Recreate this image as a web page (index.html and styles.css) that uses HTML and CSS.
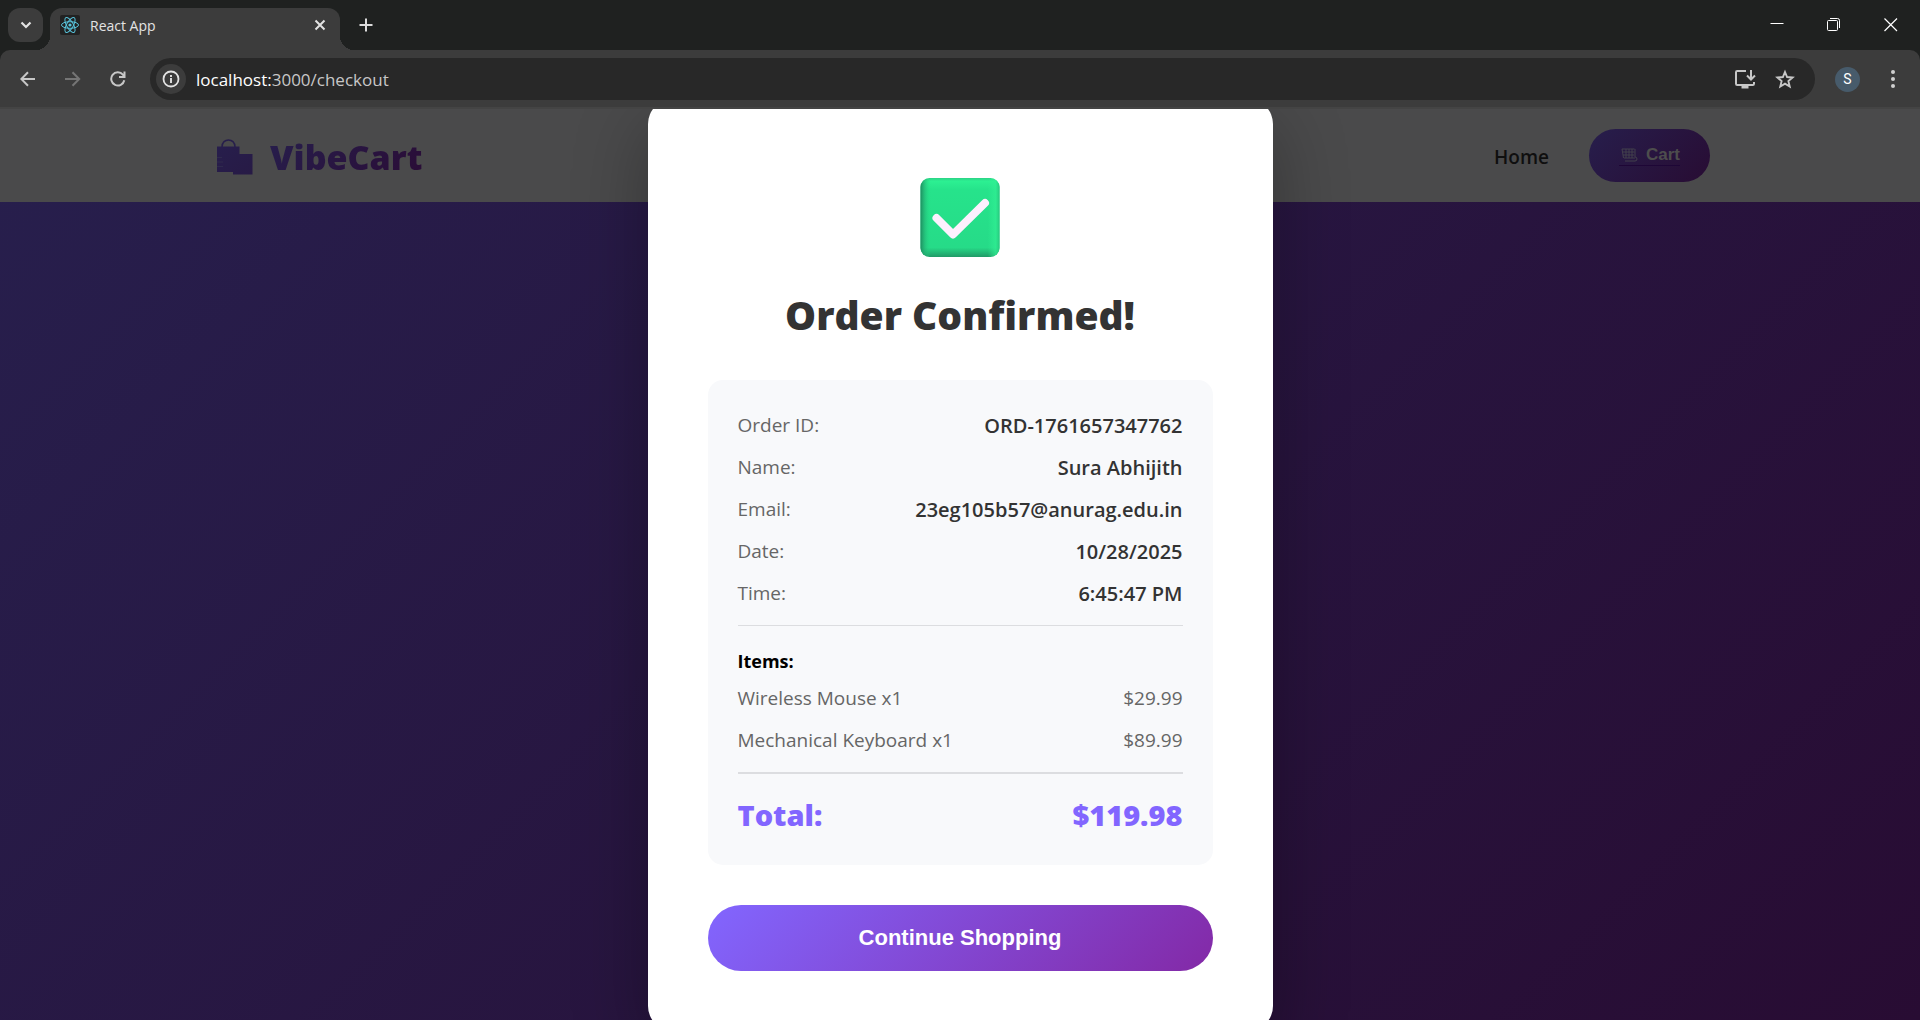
FILE: index.html
```html
<!DOCTYPE html>
<html lang="en">
<head>
<meta charset="utf-8">
<title>React App</title>
<link rel="stylesheet" href="styles.css">
</head>
<body>
<div class="tabstrip">
  <button class="tab-search" aria-label="Search tabs"><svg width="12" height="12" viewBox="0 0 12 12"><path d="M1.500 3.500 6 8l4.500-4.500" fill="none" stroke="#e3e3e3" stroke-width="2.200"/></svg></button>
  <div class="tab">
    <svg class="favicon" viewBox="0 0 20 20"><rect width="20" height="20" rx="2" fill="#222"/><g fill="none" stroke="#58c4dc" stroke-width="1"><ellipse cx="10" cy="10" rx="8.500" ry="3.300"/><ellipse cx="10" cy="10" rx="8.500" ry="3.300" transform="rotate(60 10 10)"/><ellipse cx="10" cy="10" rx="8.500" ry="3.300" transform="rotate(120 10 10)"/></g><circle cx="10" cy="10" r="1.600" fill="#58c4dc"/></svg>
    <span class="tab-title">React App</span>
    <button class="tab-close" aria-label="Close tab"><svg width="12" height="12" viewBox="0 0 12 12"><path d="M1.500 1.500l9 9m0-9l-9 9" stroke="#e3e3e3" stroke-width="2"/></svg></button>
  </div>
  <button class="new-tab" aria-label="New tab"><svg width="14" height="14" viewBox="0 0 14 14"><path d="M7 0.500v13M0.500 7h13" stroke="#dcdcdc" stroke-width="2"/></svg></button>
  <div class="window-controls">
    <button aria-label="Minimize"><svg width="14" height="14" viewBox="0 0 14 14"><path d="M0.500 5.500h13" stroke="#fff"/></svg></button>
    <button aria-label="Restore"><svg width="14" height="14" viewBox="0 0 14 14" fill="none" stroke="#fff"><rect x="0.500" y="2.500" width="10" height="10" rx="1"/><path d="M3 0.500h7.500q2 0 2 2V10"/></svg></button>
    <button aria-label="Close"><svg width="14" height="14" viewBox="0 0 14 14"><path d="M0.500 0.500l12.500 12.500m0-12.500l-12.500 12.500" stroke="#fff" stroke-width="1.200"/></svg></button>
  </div>
</div>
<div class="toolbar">
  <div class="nav-buttons">
    <button aria-label="Back"><svg width="16" height="16" viewBox="0 0 16 16"><path d="M15 8H1.500M8 1.200 1.300 8 8 14.800" fill="none" stroke="#c7c7c7" stroke-width="2"/></svg></button>
    <button aria-label="Forward"><svg width="16" height="16" viewBox="0 0 16 16"><path d="M0 8h14M7.500 1.200 14.200 8 7.500 14.800" fill="none" stroke="#757575" stroke-width="2"/></svg></button>
    <button aria-label="Reload"><svg width="16" height="16" viewBox="0 0 16 16"><path d="M14.300 9.300a6.600 6.600 0 1 1-1.400-5.600L14.300 5M14.500 0.500V6H9" fill="none" stroke="#c7c7c7" stroke-width="2"/></svg></button>
  </div>
  <div class="omnibox">
    <button class="site-info" aria-label="Site information"><svg width="18" height="18" viewBox="0 0 18 18"><circle cx="9" cy="9" r="7.500" fill="none" stroke="#e3e3e3" stroke-width="1.800"/><path d="M9 8v5M9 5v1.900" stroke="#e3e3e3" stroke-width="1.900"/></svg></button>
    <div class="address"><span class="host">localhost:</span>3000/checkout</div>
    <button class="install" aria-label="Install app"><svg width="22" height="20" viewBox="0 0 22 20"><path d="M12 2H3.200Q2 2 2 3.200v11.600Q2 16 3.200 16h15.600q1.200 0 1.200-1.200V13M17 1v9M13 6.500l4 4 4-4" fill="none" stroke="#c7c7c7" stroke-width="2"/><path d="M7.500 16h7v3.500h-7z" fill="#c7c7c7"/></svg></button>
    <button class="star" aria-label="Bookmark"><svg width="20" height="20" viewBox="0 0 20 20"><path d="M10 3l2.100 5 5.500.500-4.200 3.600 1.300 5.400-4.700-2.800-4.700 2.800 1.300-5.400-4.200-3.600 5.500-.500z" fill="none" stroke="#c7c7c7" stroke-width="1.900"/></svg></button>
  </div>
  <button class="profile" aria-label="Profile">S</button>
  <button class="menu" aria-label="Menu"><svg width="6" height="20" viewBox="0 0 6 20" fill="#d0d0d0"><circle cx="3" cy="3" r="2"/><circle cx="3" cy="10" r="2"/><circle cx="3" cy="17" r="2"/></svg></button>
</div>
<div class="page">
  <header class="site-header">
    <div class="container">
      <a class="logo" href="#">
        <svg width="36" height="37" viewBox="0 0 36 37"><defs><linearGradient id="bag" x1="0" y1="0" x2="1" y2="1"><stop offset="0" stop-color="#271e4c"/><stop offset="1" stop-color="#271a45"/></linearGradient></defs><path d="M5 8C5-1.500 18-1.500 18 8" fill="none" stroke="#271e4c" stroke-width="1.500"/><path d="M0 7.500h22.500v7.500H35.500v20.500h-19.500v-2.500H0z" fill="url(#bag)"/><path d="M0 18.500h5M0 23h6M0 27.500h6" stroke="#33304f" stroke-width=".7"/></svg>
        <span class="logo-text">VibeCart</span>
      </a>
      <nav>
        <a class="home" href="#">Home</a>
        <a class="cart-link" href="#"><span class="cart-label"><svg width="17" height="14" viewBox="0 0 17 14" fill="none" stroke="#43404d"><path d="M1 1h12.500M1.500 4h12M2 7h11M3 10h11M1 1l1.500 9M5 1v9M8 1v9M11 1v9M14 1v8q2 0 2 2t-2 2H4"/></svg>Cart</span></a>
      </nav>
    </div>
  </header>
  <div class="overlay">
    <main class="modal" role="dialog" aria-labelledby="title">
      <svg class="check" viewBox="0 0 80 80"><defs>
        <linearGradient id="face" x1="0" y1="0" x2="0" y2="1"><stop offset="0" stop-color="#2cd286"/><stop offset=".04" stop-color="#2cf092"/><stop offset=".15" stop-color="#26e38b"/><stop offset=".88" stop-color="#26db88"/><stop offset="1" stop-color="#209a67"/></linearGradient>
        <linearGradient id="side" x1="0" y1="0" x2="1" y2="0"><stop offset="0" stop-color="#1f8d61"/><stop offset=".13" stop-color="#26dd88" stop-opacity="0"/><stop offset=".85" stop-color="#30ef93" stop-opacity="0"/><stop offset=".95" stop-color="#30ef93" stop-opacity=".7"/><stop offset="1" stop-color="#27c77e"/></linearGradient></defs>
        <rect x="0.500" width="79" height="79" rx="9" fill="url(#face)"/><rect x="0.500" width="79" height="79" rx="9" fill="url(#side)"/><path d="M16.500 40 33 56.500 65 25" fill="none" stroke="#fdf0fe" stroke-width="8" stroke-linecap="round" stroke-linejoin="round"/></svg>
      <h1 id="title">Order Confirmed!</h1>
      <section class="details">
        <dl class="rows">
          <div class="row"><dt>Order ID:</dt><dd>ORD-1761657347762</dd></div>
          <div class="row"><dt>Name:</dt><dd>Sura Abhijith</dd></div>
          <div class="row"><dt>Email:</dt><dd>23eg105b57@anurag.edu.in</dd></div>
          <div class="row"><dt>Date:</dt><dd>10/28/2025</dd></div>
          <div class="row"><dt>Time:</dt><dd>6:45:47 PM</dd></div>
        </dl>
        <div class="items">
          <h2>Items:</h2>
          <div class="rows">
            <div class="row"><span>Wireless Mouse x1</span><span>$29.99</span></div>
            <div class="row"><span>Mechanical Keyboard x1</span><span>$89.99</span></div>
          </div>
        </div>
        <div class="total"><span>Total:</span><span>$119.98</span></div>
      </section>
      <button class="continue">Continue Shopping</button>
    </main>
  </div>
</div>
</body>
</html>
```
FILE: styles.css
```css
* { box-sizing: border-box; }
body {
  margin: 0;
  height: 100vh;
  display: flex;
  flex-direction: column;
  overflow: hidden;
  background: #1f2120;
  font-family: "Open Sans", "Noto Sans", sans-serif;
}
button { border: 0; padding: 0; background: none; font: inherit; color: inherit; }
button svg { display: block; }
a { color: inherit; text-decoration: none; }

.tabstrip { flex: none; height: 50px; padding: 8px 8px 0; display: flex; align-items: flex-start; }
.tab-search {
  width: 35px; height: 34px; border-radius: 12px; background: #3c3c3c;
  display: grid; place-items: center;
}
.tab {
  position: relative;
  width: 290px; height: 42px; margin-left: 7px; padding: 0 14px 8px 10px;
  display: flex; align-items: center; gap: 10px;
  border-radius: 12px 12px 0 0; background: #3c3c3c;
}
.tab::before, .tab::after {
  content: ""; position: absolute; bottom: 0; width: 14px; height: 14px;
}
.tab::before { left: -14px; background: radial-gradient(circle at 0 0, transparent 14px, #3c3c3c 14px); }
.tab::after { right: -14px; background: radial-gradient(circle at 100% 0, transparent 14px, #3c3c3c 14px); }
.favicon { width: 20px; height: 20px; }
.tab-title { flex: 1; font-size: 14px; color: #e3e3e3; }
.new-tab { margin: 10px 0 0 19px; }
.window-controls { margin: 10px 14px 0 auto; display: flex; gap: 43px; }

.toolbar {
  flex: none; height: 59px; padding: 8px 24px 7px 20px;
  display: flex; align-items: center;
  background: #3c3c3c; border-bottom: 2px solid #444; border-radius: 10px 10px 0 0;
}
.nav-buttons { display: flex; gap: 29px; width: 130px; }
.omnibox {
  flex: 1; height: 42px; padding: 0 20px 0 6px; border-radius: 21px;
  display: flex; align-items: center; background: #282828;
}
.site-info { width: 30px; height: 30px; border-radius: 15px; background: #3c3c3c; display: grid; place-items: center; }
.address { flex: 1; margin-left: 10px; font-size: 17px; color: #c7c7c7; }
.host { color: #fff; }
.star { margin-left: 19px; }
.profile { width: 25px; height: 25px; margin-left: 20px; border-radius: 13px; background: #475b6b; color: #fff; font: 14px Roboto, sans-serif; }
.menu { margin-left: 30px; }

.page {
  position: relative; flex: 1; min-height: 0; overflow: hidden;
  background: linear-gradient(135deg, #271f4d, #280c33);
}
.site-header { height: 93px; background: #4a4a4b; }
.container {
  max-width: 1500px; height: 100%; margin: 0 auto; padding-left: 7px;
  display: flex; align-items: center; justify-content: space-between;
}
.logo { display: flex; align-items: center; gap: 17px; padding-top: 3px; }
.logo-text {
  font-size: 34px; font-weight: 800; line-height: 44px;
  background: linear-gradient(135deg, #271e4c, #2a0c36); background-clip: text; color: transparent;
}
nav { display: flex; align-items: center; gap: 40px; }
.home { padding-top: 2px; font-size: 19px; font-weight: 600; color: #0f0f0f; }
.cart-link {
  height: 53px; padding: 0 30px; border-radius: 27px;
  display: flex; align-items: center;
  background: linear-gradient(135deg, #271e4c, #280c33);
  color: #4d4d4d; font: bold 17px "Liberation Sans", Arial, sans-serif;
}
.cart-label { display: flex; align-items: center; gap: 8px; padding-left: 2px; border-bottom: 1px solid #1e0636; }

.overlay { position: absolute; inset: 0; display: flex; align-items: center; justify-content: center; }
.modal {
  flex: none; width: 625px; padding: 79px 60px 60px;
  display: flex; flex-direction: column; align-items: stretch;
  background: #fff; border-radius: 25px; box-shadow: 0 25px 75px rgba(0, 0, 0, .3);
}
.check { width: 80px; height: 80px; align-self: center; }
h1 { margin: 30px 0 38px; font-size: 39px; line-height: 54px; font-weight: 800; text-align: center; color: #333; }
.details { padding: 32px 30px 30px; border-radius: 15px; background: #f8f9fb; font-size: 19px; line-height: 27px; color: #666; }
.rows { margin: 0; display: flex; flex-direction: column; gap: 15px; }
.row, .total { display: flex; justify-content: space-between; }
dd { margin: 0; font-size: 20px; font-weight: 600; color: #333; }
.items { margin-top: 18px; padding-top: 22px; border-top: 1px solid #dcdde0; }
h2 { margin: 0 0 10px; font-size: 18px; line-height: 27px; font-weight: 700; color: #000; }
.total {
  margin-top: 18px; padding-top: 20px; border-top: 2px solid #dcdde0;
  font-size: 29px; line-height: 41px; font-weight: 800; color: #8266ff;
}
.continue {
  height: 66px; margin-top: 40px; border-radius: 33px;
  background: linear-gradient(135deg, #8266ff, #8329a6);
  color: #fff; font: bold 22px "Liberation Sans", Arial, sans-serif;
}
```
